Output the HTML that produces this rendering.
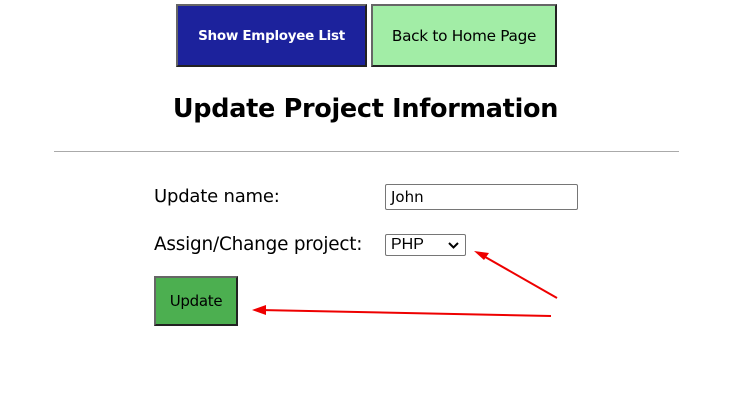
<!DOCTYPE html>
<html><head><meta charset="utf-8"><style>
body{margin:0;width:743px;height:409px;background:#fff;position:relative;overflow:hidden;font-family:"DejaVu Sans",sans-serif;}
.a{position:absolute;box-sizing:border-box;}
.btn{display:flex;align-items:center;justify-content:center;border:2px solid;border-color:#666 #222 #222 #666;font-size:14.5px;letter-spacing:-0.3px}
.lbl{font-size:18px;color:#000;letter-spacing:-0.2px}
</style></head><body>
<div class="a btn" style="left:176px;top:4px;width:191px;height:63px;background:#1c229c;color:#fff;font-weight:bold;font-size:13.5px">Show Employee List</div>
<div class="a btn" style="left:371px;top:4px;width:186px;height:63px;background:#a2eda6;color:#000;font-size:15.3px">Back to Home Page</div>
<div class="a" style="left:0;width:731px;top:94px;text-align:center;font-size:25.5px;font-weight:bold;letter-spacing:-0.3px">Update Project Information</div>
<div class="a" style="left:54px;top:151px;width:625px;height:1px;background:#aaa"></div>
<div class="a lbl" style="left:154px;top:186px">Update name:</div>
<div class="a" style="left:385px;top:184px;width:193px;height:26px;border:1px solid #767676;border-radius:2px;font-size:15px;padding:3px 0 0 5px">John</div>
<div class="a lbl" style="left:154px;top:234px;font-size:18.4px">Assign/Change project:</div>
<div class="a" style="left:385px;top:234px;width:81px;height:22px;border:1px solid #767676;border-radius:2px;font-family:'Liberation Sans',sans-serif;font-size:16px;padding:1px 0 0 5px">PHP
<svg style="position:absolute;right:6px;top:7px" width="11" height="7"><path d="M1 1l4.5 4.5L10 1" stroke="#000" stroke-width="2" fill="none"/></svg></div>
<div class="a btn" style="left:154px;top:276px;width:84px;height:50px;background:#4caf50;color:#000;font-size:15px">Update</div>
<svg class="a" style="left:0;top:0" width="743" height="409">
<path d="M557 298 L480 254" stroke="#e00" stroke-width="2" fill="none"/>
<path d="M474 251 L489 253 L484 260 Z" fill="#e00"/>
<path d="M551 316 L260 310" stroke="#e00" stroke-width="2" fill="none"/>
<path d="M252 310 L266 305 L266 315 Z" fill="#e00"/>
</svg>
</body></html>
